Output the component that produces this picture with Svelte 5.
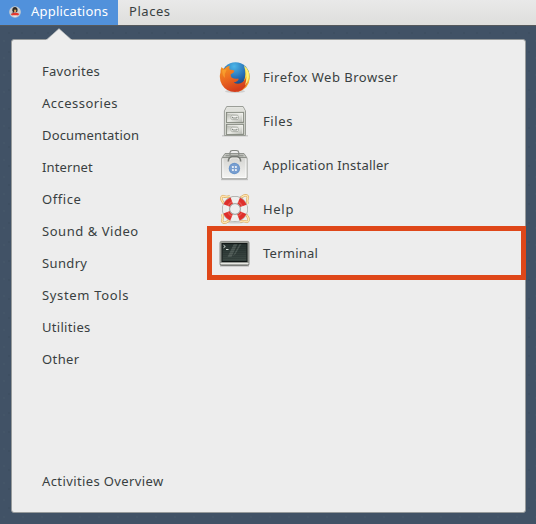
<script>
  const categories = [
    { name: 'Favorites', tracking: .29 },
    { name: 'Accessories', tracking: .47 },
    { name: 'Documentation', tracking: .16 },
    { name: 'Internet', tracking: .12 },
    { name: 'Office', tracking: .55 },
    { name: 'Sound & Video', tracking: .54 },
    { name: 'Sundry', tracking: .36 },
    { name: 'System Tools', tracking: .67 },
    { name: 'Utilities', tracking: .3 },
    { name: 'Other', tracking: .4 }
  ];
  const apps = [
    { id: 'firefox', name: 'Firefox Web Browser', tracking: .49 },
    { id: 'files', name: 'Files', tracking: .6 },
    { id: 'installer', name: 'Application Installer', tracking: .2 },
    { id: 'help', name: 'Help', tracking: .7 },
    { id: 'terminal', name: 'Terminal', tracking: .25 }
  ];
</script>

<div class="desktop">
  <header class="topbar">
    <div class="applications">
      <svg class="logo" width="12" height="12" viewBox="0 0 12 12">
        <circle cx="6" cy="6" r="5.8" fill="#c9cdd0" />
        <path d="M3.3 5Q3 1.2 6.2 1Q9 1.3 8.5 5.3L7.5 6.3H4.3Z" fill="#2c2926" />
        <path d="M5.2 3.7Q6.5 3 7.4 4L7 6.2L5 5.8Z" fill="#dfa35c" />
        <path d="M1.7 8.2Q5 6.3 8.5 7L10.5 8L8.8 9.5H3.3Z" fill="#e8352c" />
        <path d="M2 7.4L4.5 6L5 7Z" fill="#6d3030" />
        <path d="M3 9.6H9Q6.3 12.2 3 9.6Z" fill="#e4e7ea" />
      </svg>
      <span>Applications</span>
    </div>
    <span class="places">Places</span>
  </header>

  <main class="menu">
    <svg class="pointer" width="26" height="13" viewBox="0 0 26 13">
      <path d="M0 13V12L13 .6L26 12V13Z" fill="#ededed" />
      <path d="M1 11.5L13 .6L25 11.5" fill="none" stroke="#a1a6a8" stroke-width=".6" />
    </svg>
    <nav class="categories">
      {#each categories as category}
        <div class="category"><span style="letter-spacing: {category.tracking}px">{category.name}</span></div>
      {/each}
      <div class="category overview"><span>Activities Overview</span></div>
    </nav>
    <section class="apps">
      {#each apps as app}
        <div class="app" class:selected={app.id === 'terminal'}>
          <svg width="32" height="32" viewBox="0 0 32 32">
            {#if app.id === 'firefox'}
              <defs>
                <radialGradient id="globe" cx=".45" cy=".15" r=".8"><stop stop-color="#4cb6e8" /><stop offset=".55" stop-color="#256cb3" /><stop offset="1" stop-color="#153468" /></radialGradient>
                <linearGradient id="fox" x1="0" y1="0" x2=".4" y2="1"><stop stop-color="#f39a24" /><stop offset=".5" stop-color="#ed6c1f" /><stop offset="1" stop-color="#d33d1b" /></linearGradient>
                <linearGradient id="tail" x1="0" y1="0" x2="0" y2="1"><stop stop-color="#fff36b" /><stop offset=".5" stop-color="#fbc82b" /><stop offset="1" stop-color="#ef7420" /></linearGradient>
              </defs>
              <ellipse cx="16" cy="30.4" rx="10" ry="1.5" fill="#bbb" opacity=".6" />
              <circle cx="16.5" cy="15.2" r="14" fill="url(#globe)" />
              <path d="M25 4.5Q31 9 30.8 17Q30 28 19 30.8L12 28Q22 28 24.5 21Q28 14 25 4.5Z" fill="url(#tail)" />
              <path d="M2.5 6Q3.6 7.6 5.4 7.8Q7.5 5.4 10.7 4.7Q9.9 7.3 11 8.8Q13.6 8.6 15.5 9.8Q15.2 11.9 11.8 13.2Q11.5 15.2 12.6 16.4Q15.5 18.2 19.1 17.5Q20.3 18.4 18.4 20Q16.7 21.4 14.6 21.4Q19.4 24.3 24.2 20.8Q26.8 18.6 27.4 15.2Q29.5 18.5 28 22.5Q24.1 30.9 16 31Q7.3 30.9 3 23.8Q-.3 18 1.4 11.5Q1.4 8.3 2.5 6Z" fill="url(#fox)" />
              <path d="M3.2 9Q5 8.4 7.7 8.5Q5.2 12.5 6 17Q2.8 14.2 3.2 9Z" fill="#ffb638" opacity=".5" />
              <path d="M26.4 6.3Q30.3 11 29.8 16Q29.2 21 26 24.5Q28.7 15 26.4 6.3Z" fill="#fff178" />
            {:else if app.id === 'files'}
              <defs>
                <linearGradient id="cabinet" x1="0" y1="0" x2="1" y2="1"><stop stop-color="#dcded7" /><stop offset="1" stop-color="#b8bbb3" /></linearGradient>
                <linearGradient id="drawer" x1="0" y1="0" x2="1" y2="1"><stop stop-color="#a9aca3" /><stop offset=".5" stop-color="#e9eae5" /><stop offset="1" stop-color="#aeb1aa" /></linearGradient>
              </defs>
              <path d="M3 30H29V31.5H3Z" fill="#aaa" opacity=".5" />
              <path d="M7.7 1.5H24.1L26.5 6V30.5H5.4V6Z" fill="#e9eae5" stroke="#92958e" stroke-width=".9" />
              <path d="M8.2 2.4H23.7L25.4 6.1H6.5Z" fill="#dfe0db" />
              <rect x="6.2" y="6.2" width="19.5" height="23.6" fill="url(#cabinet)" />
              {#each [7, 19] as y}
                <rect x="7.5" y={y + .5} width="17" height="10" fill="url(#drawer)" stroke="#85897f" stroke-width=".9" />
                <path d="M8.4 {y + 1.4}H23.6V{y + 9.5}" fill="none" stroke="#f5f5f1" stroke-width=".7" />
                <rect x="12" y={y + 3.2} width="7.4" height="4.4" rx="1.3" fill="#f4f4f1" stroke="#969b92" stroke-width=".7" />
                <path d="M13.5 {y + 4.8}V{y + 6}H17.9V{y + 4.8}" fill="none" stroke="#777d75" stroke-width=".9" />
              {/each}
            {:else if app.id === 'installer'}
              <defs><linearGradient id="bag" x1="0" y1="0" x2="0" y2="1"><stop stop-color="#d5d5d2" /><stop offset="1" stop-color="#f5f5f3" /></linearGradient></defs>
              <path d="M2 29.7H29V31.2H2Z" fill="#999" opacity=".5" />
              <path d="M6 4.5H25L27.7 8.5H3.3Z" fill="#c6c8c3" stroke="#898c87" stroke-width=".9" />
              <path d="M6.5 6.6H24.5" stroke="#969993" stroke-width="1.6" />
              <path d="M11 6V3.5Q11.2 1.5 13.4 1.5H17.4Q19.6 1.5 19.8 3.5V6" fill="none" stroke="#858883" stroke-width="1.1" />
              <rect x="2.8" y="8.5" width="25.2" height="21.2" rx=".8" fill="url(#bag)" stroke="#8a8c87" stroke-width=".9" />
              <path d="M3.8 9.6V28.7H27V9.6" fill="none" stroke="#fff" stroke-width=".9" />
              <path d="M9.3 12.5Q9.6 8.2 12.5 7.7H18.5Q21.3 8.2 21.7 12.5" fill="none" stroke="#767974" stroke-width="1.6" />
              <path d="M11 11.2Q11.4 9.1 13 8.9H18Q19.7 9.1 20.1 11.2" fill="none" stroke="#f2f2ef" stroke-width=".8" />
              <circle cx="15.4" cy="19.5" r="5.7" fill="#6b96ca" />
              <circle cx="15.4" cy="19.5" r="4.5" fill="#799fd0" />
              {#each [13.9, 16.9] as x}{#each [18, 21] as y}<rect x={x - .95} y={y - .95} width="1.9" height="1.9" rx=".4" fill="#eaf0f5" />{/each}{/each}
            {:else if app.id === 'help'}
              <ellipse cx="16" cy="29" rx="9" ry="1.6" fill="#aaa" opacity=".45" />
              {#each [0, 90, 180, 270] as angle}
                <g transform="rotate({angle} 16 16)">
                  <path d="M5 11L2.7 7Q1.5 4 4 3.1Q7.5 4.5 11 3.3" fill="none" stroke="#dba95c" stroke-width="2.4" />
                  <path d="M5 11L2.7 7Q1.5 4 4 3.1Q7.5 4.5 11 3.3" fill="none" stroke="#ffe5ae" stroke-width="1.3" />
                </g>
              {/each}
              <circle cx="16" cy="16" r="9" fill="none" stroke="#a2a4a1" stroke-width="7.8" />
              <circle cx="16" cy="16" r="9" fill="none" stroke="#eeeeec" stroke-width="6.6" />
              <circle cx="16" cy="16" r="9" fill="none" stroke="#df302b" stroke-width="6.8" stroke-dasharray="7.2 6.937" stroke-dashoffset="3.6" transform="rotate(45 16 16)" />
              <circle cx="16" cy="16" r="7.8" fill="none" stroke="#fff" stroke-width="1.4" opacity=".18" />
              <circle cx="16" cy="16" r="5.4" fill="none" stroke="#a5a7a4" stroke-width=".9" />
            {:else}
              <defs>
                <linearGradient id="screen" x1="0" y1="0" x2="0" y2="1"><stop stop-color="#26322f" /><stop offset="1" stop-color="#3d4a45" /></linearGradient>
                <pattern id="lines" width="4" height="2" patternUnits="userSpaceOnUse"><path d="M0 1.5H4" stroke="#17201e" stroke-width=".6" opacity=".35" /></pattern>
              </defs>
              <path d="M1 27H30V30H1Z" fill="#888" opacity=".3" />
              <rect x="1" y="4.4" width="29" height="24.1" rx="1.5" fill="#a5a7a2" stroke="#60635f" stroke-width=".7" />
              <path d="M1.5 26.5H29.5" stroke="#e8e8e4" />
              <rect x="1.4" y="4.8" width="28.2" height="21" fill="#969a94" />
              <rect x="2.5" y="6" width="26" height="19" fill="#111716" />
              <rect x="3.5" y="7" width="24" height="17" fill="url(#screen)" />
              <path d="M14.8 7H18.5L12.5 20H8.5ZM20.5 7H22.5L16.5 17L14 19Z" fill="#a5b0aa" opacity=".28" />
              <rect x="3.5" y="7" width="24" height="17" fill="url(#lines)" />
              <path d="M4.5 8.2L6.3 9.5L4.5 10.8M7 12.5H9.5" fill="none" stroke="#e4ebe6" stroke-width=".9" />
            {/if}
          </svg>
          <span style="letter-spacing: {app.tracking}px">{app.name}</span>
        </div>
      {/each}
    </section>
  </main>
</div>

<style>
  .desktop {
    box-sizing: border-box;
    width: 536px;
    height: 524px;
    overflow: hidden;
    background-color: #415266;
    background-image:
      radial-gradient(circle at 4px 7px, #46586a 0 .5px, transparent 1px),
      radial-gradient(circle at 13px 3px, #455769 0 .6px, transparent 1px),
      radial-gradient(circle at 9px 14px, #3e4f62 0 .8px, transparent 1.2px);
    background-size: 19px 17px, 23px 21px, 13px 19px;
    font-family: "Noto Sans", "Open Sans", sans-serif;
    font-size: 13px;
    line-height: 20px;
    color: #393f41;
  }
  .topbar {
    box-sizing: border-box;
    height: 26px;
    display: flex;
    background: linear-gradient(#e9e9e9, #dededc);
    border-bottom: 1px solid #55595c;
  }
  .applications {
    box-sizing: border-box;
    width: 118px;
    height: 25px;
    padding: 0 0 0 9px;
    display: flex;
    align-items: center;
    gap: 10px;
    background: #5191db;
    color: #fff;
  }
  .applications span, .places { line-height: 23px; height: 25px; letter-spacing: .2px; }
  .logo { margin-bottom: 1px; }
  .places { margin-left: 11px; letter-spacing: .55px; }
  .menu {
    box-sizing: border-box;
    position: relative;
    width: 515px;
    height: 474px;
    margin: 13px 0 0 11px;
    padding-top: 15px;
    display: flex;
    background: #ededed;
    border: 1px solid #969a9b;
    border-radius: 3px;
  }
  .pointer { position: absolute; left: 34px; top: -12px; }
  .categories {
    width: 195px;
    display: flex;
    flex-direction: column;
  }
  .category {
    height: 32px;
    padding-left: 30px;
    display: flex;
    align-items: center;
    white-space: nowrap;
  }
  .overview { margin-top: auto; margin-bottom: 15px; letter-spacing: .39px; }
  .apps { flex: 1; }
  .app {
    height: 44px;
    padding-left: 12px;
    display: flex;
    align-items: center;
    gap: 12px;
    white-space: nowrap;
  }
  .selected {
    width: 309px;
    box-sizing: border-box;
    position: relative;
    box-shadow: 0 0 0 5px #df4719;
    margin-left: 5px;
    padding-left: 7px;
  }
</style>
